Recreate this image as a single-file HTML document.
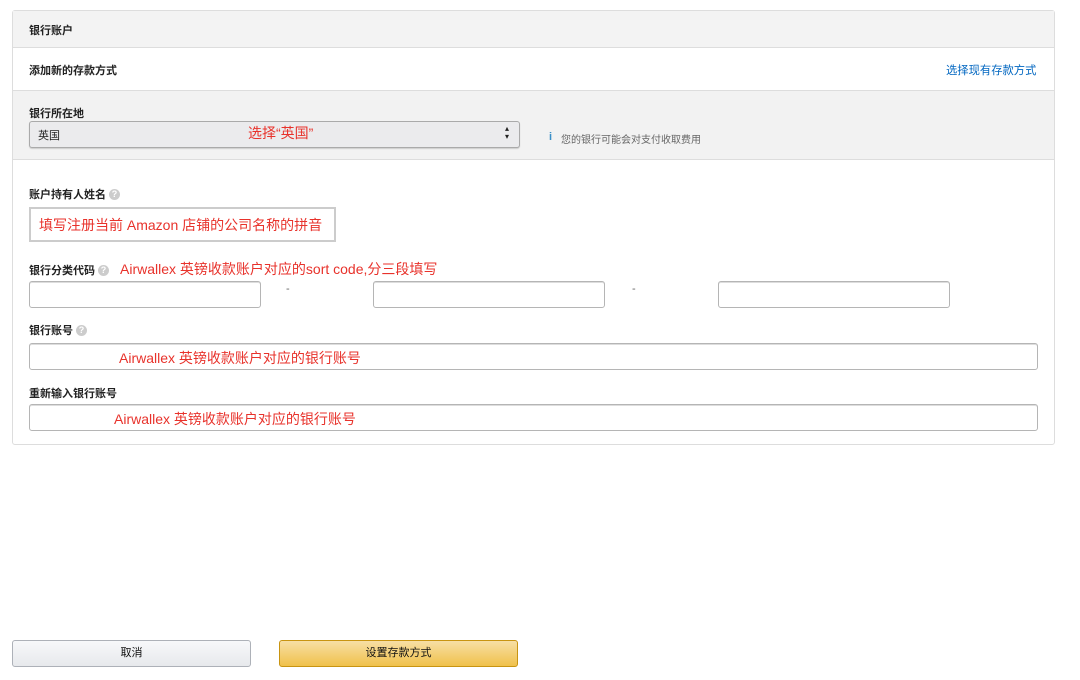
<!DOCTYPE html>
<html><head><meta charset="utf-8"><style>
*{box-sizing:border-box;margin:0;padding:0}
body{width:1080px;height:680px;background:#fff;font-family:"Liberation Sans","Noto Sans CJK SC",sans-serif;color:#111;position:relative;overflow:hidden}
.a{position:absolute}
.lbl{font-size:11px;font-weight:bold;color:#222}
.red{color:#e8322b;font-size:14px;white-space:nowrap}
.inp{position:absolute;border:1px solid #b5b5b5;border-radius:3px;background:#fff;box-shadow:inset 0 1px 0 #ddd}
.q{display:inline-block;width:11px;height:11px;border-radius:50%;background:#ccc;color:#fff;font-size:9px;line-height:11px;text-align:center;vertical-align:1px;margin-left:3px;font-weight:bold}
</style></head><body>
<div class="a" style="left:12px;top:10px;width:1043px;height:435px;border:1px solid #ddd;border-radius:3px"></div>
<div class="a" style="left:13px;top:11px;width:1041px;height:37px;background:#f3f3f3;border-bottom:1px solid #ddd"></div>
<div class="a lbl" style="left:29px;top:22px">银行账户</div>
<div class="a lbl" style="left:29px;top:62px">添加新的存款方式</div>
<div class="a" style="left:946px;top:62px;font-size:11.3px;color:#0066c0">选择现有存款方式</div>
<div class="a" style="left:13px;top:90px;width:1041px;height:70px;background:#f2f2f2;border-top:1px solid #ddd;border-bottom:1px solid #ddd"></div>
<div class="a lbl" style="left:29px;top:105px">银行所在地</div>
<div class="a" style="left:29px;top:121px;width:491px;height:27px;border:1px solid #aaa;border-radius:3px;background:#ebebed;box-shadow:0 1px 1px #ccc"></div>
<div class="a" style="left:38px;top:127px;font-size:11px;color:#222">英国</div>
<div class="a red" style="left:248px;top:123px">选择“英国”</div>
<div class="a" style="left:505px;top:125px;font-size:8px;line-height:8px;color:#222">▴<br>▾</div>
<div class="a" style="left:549px;top:131px;font-size:11px;color:#3a8fc7;font-weight:bold">i</div>
<div class="a" style="left:561px;top:131px;font-size:10px;color:#666">您的银行可能会对支付收取费用</div>
<div class="a lbl" style="left:29px;top:186px">账户持有人姓名<span class="q">?</span></div>
<div class="a" style="left:29px;top:207px;width:307px;height:35px;border:2px solid #ccc;background:#fff"></div>
<div class="a red" style="left:39px;top:215px">填写注册当前 Amazon 店铺的公司名称的拼音</div>
<div class="a lbl" style="left:29px;top:262px">银行分类代码<span class="q">?</span></div>
<div class="a red" style="left:120px;top:259px">Airwallex 英镑收款账户对应的sort code,分三段填写</div>
<div class="inp" style="left:29px;top:281px;width:232px;height:27px"></div>
<div class="a" style="left:286px;top:283px;font-size:11px;color:#666">-</div>
<div class="inp" style="left:373px;top:281px;width:232px;height:27px"></div>
<div class="a" style="left:632px;top:283px;font-size:11px;color:#666">-</div>
<div class="inp" style="left:718px;top:281px;width:232px;height:27px"></div>
<div class="a lbl" style="left:29px;top:322px">银行账号<span class="q">?</span></div>
<div class="inp" style="left:29px;top:343px;width:1009px;height:27px"></div>
<div class="a red" style="left:119px;top:348px">Airwallex 英镑收款账户对应的银行账号</div>
<div class="a lbl" style="left:29px;top:385px">重新输入银行账号</div>
<div class="inp" style="left:29px;top:404px;width:1009px;height:27px"></div>
<div class="a red" style="left:114px;top:409px">Airwallex 英镑收款账户对应的银行账号</div>
<div class="a" style="left:12px;top:640px;width:239px;height:27px;border:1px solid #adb1b8;border-radius:3px;background:linear-gradient(#f7f8fa,#e7e9ec);text-align:center;font-size:11px;line-height:25px;color:#111">取消</div>
<div class="a" style="left:279px;top:640px;width:239px;height:27px;border:1px solid #c89411;border-radius:3px;background:linear-gradient(#f7dfa5,#f0c14b);text-align:center;font-size:11px;line-height:25px;color:#111">设置存款方式</div>
</body></html>
